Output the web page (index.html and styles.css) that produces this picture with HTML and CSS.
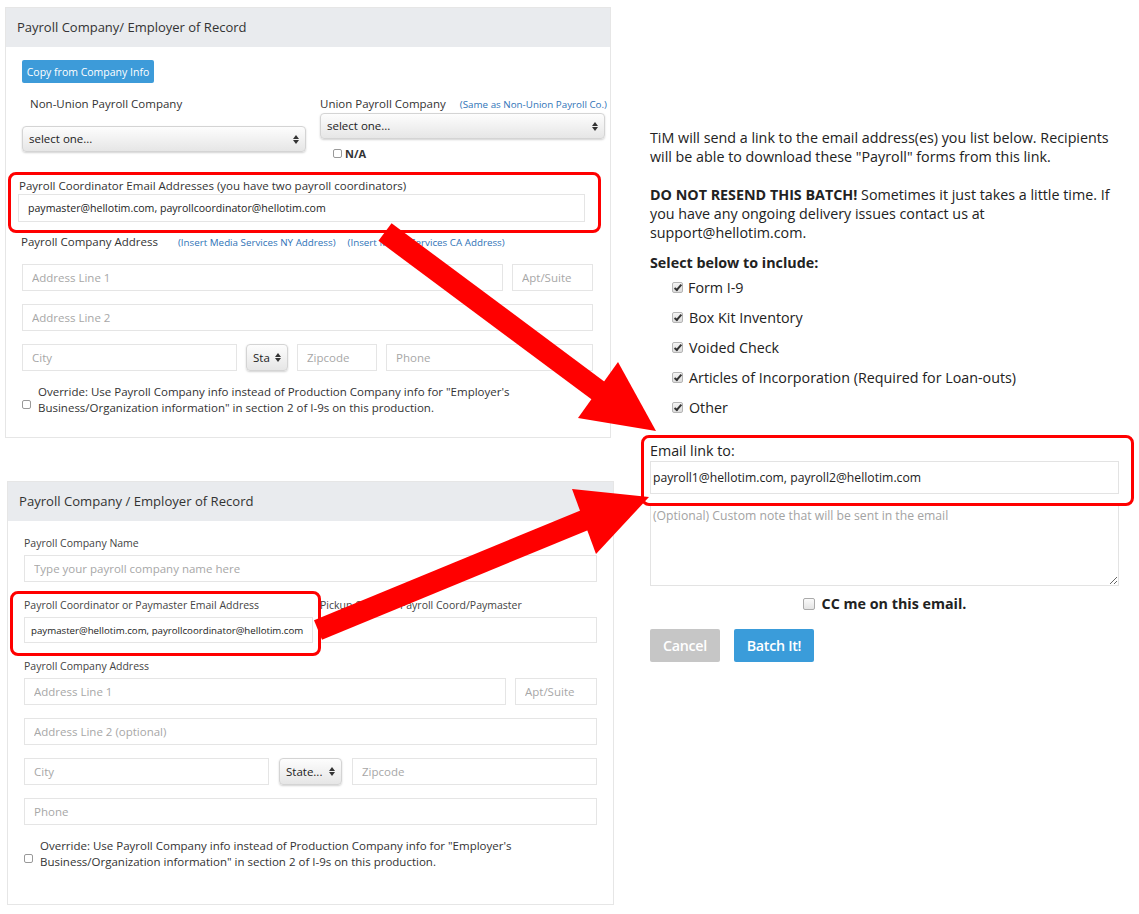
FILE: index.html
```html
<!DOCTYPE html>
<html lang="en">
<head>
    <meta charset="UTF-8">
    <meta name="viewport" content="width=device-width, initial-scale=1.0">
    <title>Payroll Company - Batch Forms</title>
    <link rel="stylesheet" href="styles.css">
</head>
<body>
    <div class="page">
        <div class="left-col">
            <!-- Old payroll company form -->
            <section class="panel panel-old">
                <div class="panel-head">Payroll Company/ Employer of Record</div>
                <div class="panel-body">
                    <button class="btn-copy">Copy from Company Info</button>
                    <div class="company-row">
                        <div class="company-col">
                            <div class="company-label">Non-Union Payroll Company</div>
                            <div class="select select-wide select-first">select one...<span class="arrows"></span></div>
                        </div>
                        <div class="company-col">
                            <div class="company-label union-label">Union Payroll Company <a class="mini-link">(Same as Non-Union Payroll Co.)</a></div>
                            <div class="select select-wide">select one...<span class="arrows"></span></div>
                            <label class="na"><span class="box"></span>N/A</label>
                        </div>
                    </div>

                    <div class="coord-block">
                        <div class="coord-label">Payroll Coordinator Email Addresses (you have two payroll coordinators)</div>
                        <input class="field coord-input" type="text" value="paymaster@hellotim.com, payrollcoordinator@hellotim.com">
                    </div>

                    <div class="addr-label">Payroll Company Address <a class="mini-link">(Insert Media Services NY Address)</a> <a class="mini-link">(Insert Media Services CA Address)</a></div>
                    <div class="field-row">
                        <input class="field old-addr1" type="text" placeholder="Address Line 1">
                        <input class="field old-apt" type="text" placeholder="Apt/Suite">
                    </div>
                    <div class="field-row">
                        <input class="field grow" type="text" placeholder="Address Line 2">
                    </div>
                    <div class="field-row">
                        <input class="field old-city" type="text" placeholder="City">
                        <div class="select old-state">Sta<span class="arrows"></span></div>
                        <input class="field old-zip" type="text" placeholder="Zipcode">
                        <input class="field grow" type="text" placeholder="Phone">
                    </div>
                    <div class="override">
                        <span class="box"></span>
                        <p>Override: Use Payroll Company info instead of Production Company info for "Employer's Business/Organization information" in section 2 of I-9s on this production.</p>
                    </div>
                </div>
            </section>

            <!-- New payroll company form -->
            <section class="panel panel-new">
                <div class="panel-head">Payroll Company / Employer of Record</div>
                <div class="panel-body">
                    <div class="small-label first-label">Payroll Company Name</div>
                    <input class="field full" type="text" placeholder="Type your payroll company name here">

                    <div class="pair-row">
                        <div>
                            <div class="small-label">Payroll Coordinator or Paymaster Email Address</div>
                            <input class="field full filled" type="text" value="paymaster@hellotim.com, payrollcoordinator@hellotim.com">
                        </div>
                        <div>
                            <div class="small-label">Pickup Code for Payroll Coord/Paymaster</div>
                            <input class="field full" type="text">
                        </div>
                    </div>

                    <div class="small-label addr-small">Payroll Company Address</div>
                    <div class="field-row tight">
                        <input class="field new-addr1" type="text" placeholder="Address Line 1">
                        <input class="field grow" type="text" placeholder="Apt/Suite">
                    </div>
                    <div class="field-row">
                        <input class="field grow" type="text" placeholder="Address Line 2 (optional)">
                    </div>
                    <div class="field-row">
                        <input class="field new-city" type="text" placeholder="City">
                        <div class="select new-state">State...<span class="arrows"></span></div>
                        <input class="field grow" type="text" placeholder="Zipcode">
                    </div>
                    <div class="field-row">
                        <input class="field grow" type="text" placeholder="Phone">
                    </div>
                    <div class="override">
                        <span class="box"></span>
                        <p>Override: Use Payroll Company info instead of Production Company info for "Employer's Business/Organization information" in section 2 of I-9s on this production.</p>
                    </div>
                </div>
            </section>
        </div>

        <!-- Batch dialog -->
        <div class="right-col">
            <p>TiM will send a link to the email address(es) you list below. Recipients will be able to download these "Payroll" forms from this link.</p>
            <p class="warn"><strong>DO NOT RESEND THIS BATCH!</strong> Sometimes it just takes a little time. If you have any ongoing delivery issues contact us at support@hellotim.com.</p>
            <p class="include-title"><strong>Select below to include:</strong></p>
            <ul class="include-list">
                <li><span class="check"></span>Form I-9</li>
                <li><span class="check"></span>Box Kit Inventory</li>
                <li><span class="check"></span>Voided Check</li>
                <li><span class="check"></span>Articles of Incorporation (Required for Loan-outs)</li>
                <li><span class="check"></span>Other</li>
            </ul>
            <div class="email-label">Email link to:</div>
            <input class="email-input" type="text" value="payroll1@hellotim.com, payroll2@hellotim.com">
            <textarea class="note" placeholder="(Optional) Custom note that will be sent in the email"></textarea>
            <label class="cc"><span class="box cc-box"></span>CC me on this email.</label>
            <div class="actions">
                <button class="btn btn-cancel">Cancel</button>
                <button class="btn btn-batch">Batch It!</button>
            </div>
        </div>

        <!-- Annotations -->
        <div class="mark mark-old"></div>
        <div class="mark mark-new"></div>
        <div class="mark mark-email"></div>
        <svg class="arrows-layer" width="1139" height="914" viewBox="0 0 1139 914">
            <line x1="385" y1="232" x2="600" y2="392" stroke="#ff0000" stroke-width="22"/>
            <polygon points="618,362 578,418 656,431" fill="#ff0000"/>
            <line x1="318" y1="630" x2="585" y2="520" stroke="#ff0000" stroke-width="21"/>
            <polygon points="572,489 596,554 649,497" fill="#ff0000"/>
        </svg>
    </div>
</body>
</html>
```

FILE: styles.css
```css
body {
    margin: 0;
    font-family: "Open Sans", Arial, sans-serif;
    color: #333;
    background: #fff;
}
.page {
    position: relative;
    width: 1139px;
    height: 914px;
    display: grid;
    grid-template-columns: 641px 1fr;
    overflow: hidden;
}
p {
    margin: 0;
}
a.mini-link {
    color: #2f73b7;
    font-size: 9.8px;
    margin-left: 16px;
    white-space: nowrap;
}

/* panels */
.panel {
    border: 1px solid #e6e6e6;
    box-sizing: border-box;
}
.panel-old {
    width: 606px;
    margin: 7px 0 0 5px;
}
.panel-new {
    width: 607px;
    margin: 43px 0 0 7px;
}
.panel-head {
    background-color: #e9ebee;
    height: 39px;
    line-height: 39px;
    padding-left: 11px;
    font-size: 13px;
}
.panel-new .panel-head {
    font-size: 13.1px;
}
.panel-old .panel-body {
    padding: 13px 5px 21px 16px;
}
.panel-new .panel-body {
    padding: 15px 16px 34px 16px;
}

.btn-copy {
    display: block;
    height: 23px;
    width: 132px;
    padding: 0;
    border: none;
    border-radius: 2px;
    background-color: #3d9bd9;
    color: #fff;
    font-family: inherit;
    font-size: 10.5px;
}

.company-row {
    display: grid;
    grid-template-columns: 284px 285px;
    gap: 14px;
    margin-top: 12px;
}
.company-label {
    font-size: 11.5px;
    line-height: 17px;
    padding-left: 8px;
    white-space: nowrap;
}
.union-label {
    padding-left: 0;
}
.union-label .mini-link {
    margin-left: 11px;
}

.select {
    position: relative;
    box-sizing: border-box;
    height: 26px;
    line-height: 24px;
    padding-left: 6px;
    border: 1px solid #d4d4d4;
    border-radius: 4px;
    background: linear-gradient(#fdfdfd, #e6e6e6);
    box-shadow: 0 1px 2px rgba(0, 0, 0, 0.18);
    font-size: 11.5px;
    color: #222;
}
.select-first {
    margin-top: 14px;
}
.arrows {
    position: absolute;
    right: 6px;
    top: 8px;
    width: 0;
    height: 0;
    border-left: 3px solid transparent;
    border-right: 3px solid transparent;
    border-bottom: 4px solid #333;
}
.arrows::after {
    content: "";
    position: absolute;
    left: -3px;
    top: 5px;
    border-left: 3px solid transparent;
    border-right: 3px solid transparent;
    border-top: 4px solid #333;
}

.box {
    display: inline-block;
    box-sizing: border-box;
    width: 9px;
    height: 9px;
    border: 1px solid #999;
    border-radius: 2px;
    background: #fff;
}
.na {
    display: flex;
    align-items: center;
    gap: 3px;
    margin: 7px 0 0 13px;
    font-size: 11px;
    font-weight: bold;
}

.coord-block {
    margin: 17px 0 0 -4px;
}
.coord-label {
    font-size: 11.5px;
    line-height: 16px;
    margin-left: 1px;
}
.field.coord-input {
    width: 567px;
    height: 28px;
    font-size: 10.6px;
    color: #222;
    padding-left: 9px;
}

.addr-label {
    margin: 12px 0 13px -1px;
    font-size: 11.5px;
    line-height: 16px;
}
.addr-label .mini-link {
    margin-left: 17px;
}
.addr-label .mini-link + .mini-link {
    margin-left: 9px;
}

.field {
    display: block;
    box-sizing: border-box;
    height: 27px;
    border: 1px solid #e5e5e5;
    padding: 0 9px;
    font-family: inherit;
    font-size: 11.5px;
    color: #222;
    background: #fff;
    outline: none;
}
.field::placeholder {
    color: #a7a7a7;
}
.field-row {
    display: flex;
    gap: 9px;
    width: 571px;
    margin-bottom: 13px;
}
.panel-new .field-row {
    width: 573px;
}
.grow {
    flex: 1;
    min-width: 0;
}
.old-addr1 { width: 481px; }
.old-apt { width: 81px; }
.old-city { width: 215px; }
.old-state { width: 42px; height: 27px; line-height: 25px; }
.old-zip { width: 80px; }

.override {
    display: flex;
    align-items: center;
    gap: 7px;
    font-size: 11.5px;
    line-height: 16px;
}
.override .box {
    margin-top: 8px;
    flex: none;
}
.override p {
    width: 490px;
}

/* new panel */
.small-label {
    font-size: 10.5px;
    line-height: 15px;
    color: #444;
}
.full {
    width: 100%;
}
.panel-new .first-label + .field {
    margin-top: 4px;
}
.pair-row {
    display: grid;
    grid-template-columns: 289px 277px;
    gap: 7px;
    margin-top: 16px;
}
.pair-row .field {
    height: 26px;
    margin-top: 4px;
}
.field.filled {
    font-size: 9.7px;
    padding: 0 4px 0 6px;
}
.addr-small {
    margin-top: 16px;
    margin-bottom: 4px;
}
.new-addr1 { width: 482px; }
.new-city { width: 245px; }
.new-state { width: 63px; height: 27px; line-height: 25px; margin: 0 1px; }
.panel-new .override p {
    width: 500px;
}

/* right column */
.right-col {
    padding: 128px 0 0 9px;
    font-size: 14.3px;
    line-height: 19px;
    color: #222;
}
.right-col p {
    width: 470px;
}
.warn {
    margin-top: 19px !important;
}
.include-title {
    margin-top: 11px !important;
}
.include-list {
    list-style: none;
    margin: 0;
    padding: 0 0 0 22px;
}
.include-list li {
    display: flex;
    align-items: center;
    height: 30px;
}
.include-list li:first-child {
    height: 24px;
    margin-top: 3px;
    margin-bottom: 3px;
}
.include-list li:first-child .check {
    margin-right: 5px;
}
.check {
    position: relative;
    display: inline-block;
    box-sizing: border-box;
    width: 11px;
    height: 11px;
    margin-right: 6px;
    border: 1px solid #b5b5b5;
    border-radius: 2px;
    background: linear-gradient(#f4f4f4, #dcdcdc);
}
.check::after {
    content: "";
    position: absolute;
    left: 3px;
    top: 0;
    width: 2px;
    height: 6px;
    border-right: 2px solid #333;
    border-bottom: 2px solid #333;
    transform: rotate(40deg);
}
.email-label {
    margin-top: 19px;
}
.email-input {
    display: block;
    box-sizing: border-box;
    width: 469px;
    height: 33px;
    margin-top: 1px;
    border: 1px solid #e3e3e3;
    padding: 0 2px;
    font-family: inherit;
    font-size: 12.2px;
    color: #222;
}
.note {
    display: block;
    box-sizing: border-box;
    width: 469px;
    height: 82px;
    margin-top: 10px;
    border: 1px solid #e3e3e3;
    padding: 2px 2px;
    font-family: inherit;
    font-size: 12.2px;
    resize: vertical;
}
.note::placeholder {
    color: #a3a3a3;
}
.cc {
    display: flex;
    align-items: center;
    justify-content: center;
    width: 469px;
    margin-top: 8px;
    font-weight: bold;
    font-size: 14.3px;
}
.cc-box {
    width: 12px;
    height: 12px;
    margin-right: 7px;
    border-color: #aaa;
    background: linear-gradient(#fafafa, #e4e4e4);
}
.actions {
    display: flex;
    gap: 14px;
    margin-top: 16px;
}
.btn {
    height: 33px;
    border: none;
    border-radius: 2px;
    color: #fff;
    font-family: inherit;
    font-size: 14.3px;
    font-weight: 600;
    letter-spacing: -0.3px;
}
.btn-cancel {
    width: 70px;
    background-color: #c6c6c6;
}
.btn-batch {
    width: 80px;
    background-color: #3a9cda;
}

/* annotations */
.mark {
    position: absolute;
    box-sizing: border-box;
    border: 3px solid #f00;
    border-radius: 8px;
}
.mark-old {
    left: 8px;
    top: 172px;
    width: 593px;
    height: 61px;
}
.mark-new {
    left: 10px;
    top: 591px;
    width: 311px;
    height: 65px;
}
.mark-email {
    left: 641px;
    top: 435px;
    width: 493px;
    height: 71px;
}
.arrows-layer {
    position: absolute;
    left: 0;
    top: 0;
    pointer-events: none;
}
```
